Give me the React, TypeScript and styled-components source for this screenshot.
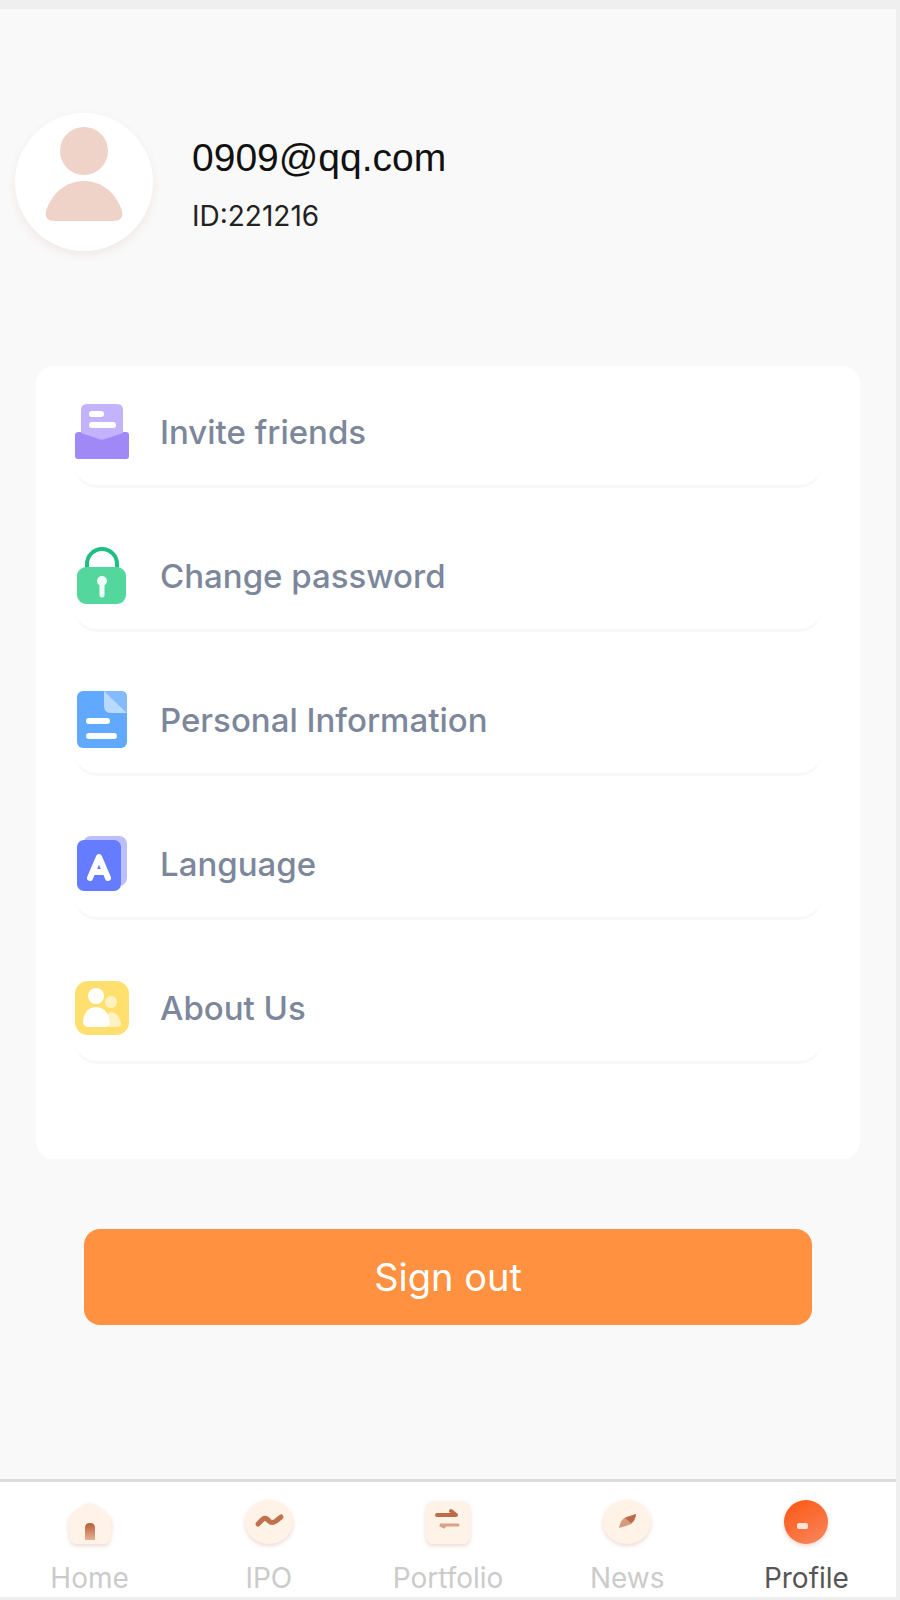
import React from "react";
import styled, { createGlobalStyle } from "styled-components";

const GlobalStyle = createGlobalStyle`
  *, *::before, *::after { box-sizing: border-box; }
  body {
    margin: 0;
    background: #f0f0f0;
    font-family: Inter, "Liberation Sans", sans-serif;
  }
`;

const Frame = styled.div`
  display: flex;
  min-height: 100vh;
  padding: 9px 4px 3px 0;
  background: #efefef;
`;

const Screen = styled.div`
  flex: 1;
  display: flex;
  flex-direction: column;
  min-width: 0;
  background: #f9f9f9;
`;

const Main = styled.main`
  flex: 1;
  display: flex;
  flex-direction: column;
`;

const Header = styled.header`
  display: flex;
  align-items: center;
  gap: 39px;
  padding: 104px 15px 115px;
`;

const Avatar = styled.div`
  display: grid;
  place-items: center;
  flex: none;
  width: 138px;
  height: 138px;
  border-radius: 50%;
  background: #fff;
  box-shadow: 0 4px 10px #f1e9e6;
`;

const Identity = styled.div`
  display: flex;
  flex-direction: column;
  gap: 16px;
  padding-top: 4px;
`;

const Email = styled.h1`
  margin: 0;
  font-family: "Liberation Sans", Arial, sans-serif;
  font-size: 39px;
  line-height: 48px;
  font-weight: 400;
  color: #111;
`;

const UserId = styled.p`
  margin: 0;
  font-size: 28px;
  line-height: 36px;
  color: #222;
`;

const Card = styled.nav`
  margin: 0 36px;
  padding: 12px 38px 95px;
  border-radius: 18px;
  background: #fff;
`;

const MenuList = styled.ul`
  display: flex;
  flex-direction: column;
  gap: 34px;
  margin: 0;
  padding: 0;
  list-style: none;
`;

const MenuLink = styled.a`
  display: flex;
  align-items: center;
  gap: 30px;
  height: 110px;
  border-bottom: 3px solid #f8f8f8;
  border-radius: 0 0 24px 24px;
  color: #7d879b;
  font-size: 33px;
  line-height: 40px;
  font-weight: 500;
  text-decoration: none;
`;

const SignOut = styled.button`
  height: 96px;
  margin: 70px 84px 80px;
  border: 0;
  border-radius: 16px;
  background: #ff9140;
  color: #fff;
  font-family: inherit;
  font-size: 38px;
  line-height: 48px;
  cursor: pointer;
`;

const TabBar = styled.nav`
  display: grid;
  grid-template-columns: repeat(5, 1fr);
  padding: 10px 0 3px;
  border-top: 3px solid #dcdcdc;
  background: #fff;
`;

const Tab = styled.a<{ $active?: boolean }>`
  display: flex;
  flex-direction: column;
  align-items: center;
  gap: 10px;
  color: ${(p) => (p.$active ? "#555" : "#cbcbcb")};
  font-size: 28px;
  line-height: 32px;
  font-weight: 400;
  text-decoration: none;
`;

const TabGlyph = styled.svg`
  width: 60px;
  height: 60px;
  filter: drop-shadow(0 2px 2px #ecd9d4);
`;

const MenuSvg = styled.svg`
  flex: none;
  width: 56px;
  height: 60px;
`;

const MenuIcon = ({ children }: { children: React.ReactNode }) => (
  <MenuSvg viewBox="0 0 56 60" aria-hidden="true">{children}</MenuSvg>
);

const InviteIcon = () => (
  <MenuIcon>
    <path d="M5 30H52Q55 30 55 33V54Q55 57 52 57H4Q1 57 1 54V33Q1 30 5 30Z" fill="#a188f7" />
    <path d="M13 2H43Q49 2 49 8V31L31 37Q28 38 25 37L7 31V8Q7 2 13 2Z" fill="#c3b3fd" />
    <path d="M18 12H27M18 23H39" stroke="#fff" strokeWidth="6" strokeLinecap="round" />
  </MenuIcon>
);

const LockIcon = () => (
  <MenuIcon>
    <path d="M13 28V18A15 15 0 0 1 43 18V28" fill="none" stroke="#1fbe83" strokeWidth="4" />
    <rect x="3" y="21" width="49" height="37" rx="9" fill="#54d79d" />
    <circle cx="28" cy="35" r="5" fill="#effff7" />
    <path d="M28 36V49" stroke="#effff7" strokeWidth="5" strokeLinecap="round" />
  </MenuIcon>
);

const DocumentIcon = () => (
  <MenuIcon>
    <rect x="3" y="1" width="50" height="57" rx="6" fill="#61a9ff" />
    <path d="M30 1H47Q53 1 53 7V23Z" fill="#82bcff" />
    <path d="M30 1L53 23H37Q30 23 30 16Z" fill="#b9d9ff" />
    <path d="M15 31H33M15 46H40" stroke="#fff" strokeWidth="6" strokeLinecap="round" />
  </MenuIcon>
);

const LanguageIcon = () => (
  <MenuIcon>
    <rect x="9" y="2" width="44" height="50" rx="8" fill="#bcbfff" />
    <rect x="3" y="6" width="44" height="51" rx="7" fill="#657cff" />
    <path d="M16 44L25 23L34 44M19 38H31" fill="none" stroke="#fff" strokeWidth="6" strokeLinecap="round" strokeLinejoin="round" />
  </MenuIcon>
);

const PeopleIcon = () => (
  <MenuIcon>
    <rect x="1" y="3" width="54" height="54" rx="13" fill="#ffdf6d" />
    <circle cx="37" cy="24" r="6" fill="#fff2c2" />
    <path d="M31 49V39Q34 34 38 34Q45 36 47 45Q47 49 42 49Z" fill="#fff2c2" />
    <circle cx="22" cy="18" r="8" fill="#fff" />
    <path d="M9 43Q11 29 22 29Q33 29 36 43Q36 49 30 49H15Q9 49 9 43Z" fill="#fff" />
  </MenuIcon>
);

const HomeGlyph = () => (
  <>
    <path d="M8 32Q8 24 15 19L26 12Q30 10 34 12L45 19Q52 24 52 32L50 46Q49 52 43 52H17Q11 52 10 46Z" fill="#fff3e7" />
    <path d="M25 48V36Q25 31 30 31Q35 31 35 36V48Z" fill="url(#door)" />
    <defs>
      <linearGradient id="door" x1="0" y1="0" x2="0" y2="1">
        <stop offset="0" stopColor="#b95c38" />
        <stop offset="1" stopColor="#e6b194" />
      </linearGradient>
    </defs>
  </>
);

const IpoGlyph = () => (
  <>
    <ellipse cx="30" cy="30" rx="24" ry="22" fill="#fff3e7" />
    <path d="M19 32L24 27Q27 25 30 29Q33 32 37 29L42 25" fill="none" stroke="#c2714e" strokeWidth="5" strokeLinecap="round" />
  </>
);

const PortfolioGlyph = () => (
  <>
    <rect x="8" y="9" width="44" height="43" rx="7" fill="#fff3e7" />
    <path d="M19 23H38M33 19L38 23" fill="none" stroke="#c06a48" strokeWidth="4" strokeLinecap="round" />
    <path d="M40 33H22L26 35" fill="none" stroke="#d9a288" strokeWidth="3" strokeLinecap="round" />
  </>
);

const NewsGlyph = () => (
  <>
    <ellipse cx="30" cy="30" rx="24" ry="22" fill="#fff3e7" />
    <path d="M39 22Q38 31 32 33L22 36Q23 28 29 25Z" fill="#d59b7e" />
    <path d="M39 22Q38 29 34 31L28 26Z" fill="#bd6a49" />
  </>
);

const ProfileGlyph = () => (
  <>
    <defs>
      <linearGradient id="orb" x1="0.2" y1="0" x2="0.8" y2="1">
        <stop offset="0" stopColor="#fb5a16" />
        <stop offset="1" stopColor="#fa8459" />
      </linearGradient>
    </defs>
    <circle cx="30" cy="30" r="22" fill="url(#orb)" />
    <rect x="21" y="31" width="11" height="6" rx="2" fill="#ffe3d6" />
  </>
);

const menu = [
  { label: "Invite friends", Icon: InviteIcon },
  { label: "Change password", Icon: LockIcon },
  { label: "Personal Information", Icon: DocumentIcon },
  { label: "Language", Icon: LanguageIcon },
  { label: "About Us", Icon: PeopleIcon },
];

const tabs = [
  { label: "Home", Glyph: HomeGlyph },
  { label: "IPO", Glyph: IpoGlyph },
  { label: "Portfolio", Glyph: PortfolioGlyph },
  { label: "News", Glyph: NewsGlyph },
  { label: "Profile", Glyph: ProfileGlyph, active: true },
];

export default function App() {
  return (
    <>
      <GlobalStyle />
      <Frame>
        <Screen>
          <Main>
            <Header>
              <Avatar>
                <svg width="80" height="110" viewBox="0 0 80 110" aria-hidden="true">
                  <circle cx="40" cy="24" r="24" fill="#efd2c8" />
                  <path d="M2 84C8 66 22 54 40 54S72 66 78 84Q80 94 69 94H11Q0 94 2 84Z" fill="#efd2c8" />
                </svg>
              </Avatar>
              <Identity>
                <Email>0909@qq.com</Email>
                <UserId>ID:221216</UserId>
              </Identity>
            </Header>
            <Card aria-label="Account">
              <MenuList>
                {menu.map(({ label, Icon }) => (
                  <li key={label}>
                    <MenuLink href="#">
                      <Icon />
                      {label}
                    </MenuLink>
                  </li>
                ))}
              </MenuList>
            </Card>
            <SignOut type="button">Sign out</SignOut>
          </Main>
          <TabBar aria-label="Main">
            {tabs.map(({ label, Glyph, active }) => (
              <Tab key={label} href="#" $active={active} aria-current={active ? "page" : undefined}>
                <TabGlyph viewBox="0 0 60 60" aria-hidden="true">
                  <Glyph />
                </TabGlyph>
                {label}
              </Tab>
            ))}
          </TabBar>
        </Screen>
      </Frame>
    </>
  );
}
